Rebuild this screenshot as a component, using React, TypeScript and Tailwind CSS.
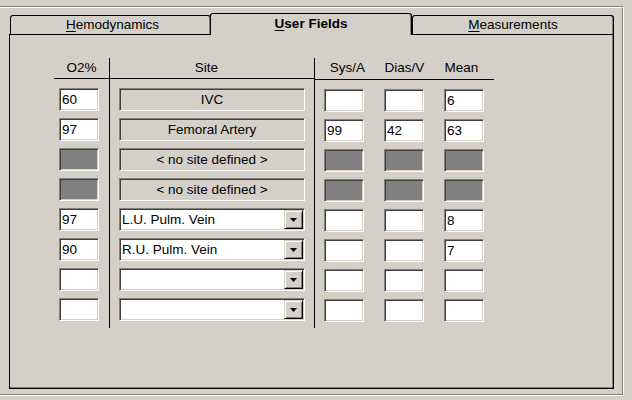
import { ReactNode } from "react"

type Site = { kind: "static" | "combo"; text: string }

interface Row {
  o2: string
  site: Site
  sys: string
  dias: string
  mean: string
  disabled?: boolean
}

const rows: Row[] = [
  { o2: "60", site: { kind: "static", text: "IVC" }, sys: "", dias: "", mean: "6" },
  { o2: "97", site: { kind: "static", text: "Femoral Artery" }, sys: "99", dias: "42", mean: "63" },
  { o2: "", site: { kind: "static", text: "< no site defined >" }, sys: "", dias: "", mean: "", disabled: true },
  { o2: "", site: { kind: "static", text: "< no site defined >" }, sys: "", dias: "", mean: "", disabled: true },
  { o2: "97", site: { kind: "combo", text: "L.U. Pulm. Vein" }, sys: "", dias: "", mean: "8" },
  { o2: "90", site: { kind: "combo", text: "R.U. Pulm. Vein" }, sys: "", dias: "", mean: "7" },
  { o2: "", site: { kind: "combo", text: "" }, sys: "", dias: "", mean: "" },
  { o2: "", site: { kind: "combo", text: "" }, sys: "", dias: "", mean: "" },
]

// classic win9x sunken edit border
const sunken =
  "border border-t-[#808080] border-l-[#808080] border-b-white border-r-white shadow-[inset_1px_1px_0_#404040,inset_-1px_-1px_0_#d4d0c8]"

function Field({ value, disabled, className = "" }: { value: string; disabled?: boolean; className?: string }) {
  return (
    <div
      className={`${sunken} h-[23px] flex items-center pl-[2px] leading-none ${
        disabled ? "bg-[#808080]" : "bg-white"
      } ${className}`}
    >
      {value}
    </div>
  )
}

function SiteBox({ site, disabled }: { site: Site; disabled?: boolean }) {
  if (site.kind === "static") {
    return (
      <div className={`${sunken} ml-[9px] w-[186px] h-[23px] flex items-center justify-center bg-[#d4d0c8] leading-none`}>
        {site.text}
      </div>
    )
  }
  return (
    <div className={`${sunken} ml-[9px] w-[186px] h-[23px] flex items-stretch bg-white p-[1px] leading-none`}>
      <div className="flex-1 flex items-center pl-[1px]">{disabled ? "" : site.text}</div>
      <div className="w-[19px] flex items-center justify-center bg-[#d4d0c8] border border-t-[#d4d0c8] border-l-[#d4d0c8] border-b-black border-r-black shadow-[inset_1px_1px_0_#fff,inset_-1px_-1px_0_#808080]">
        <svg width="7" height="4" viewBox="0 0 7 4" className="mt-[1px]">
          <path d="M0 0h7L3.5 4z" fill="#000" />
        </svg>
      </div>
    </div>
  )
}

function Tab({ children, selected, className = "" }: { children: ReactNode; selected?: boolean; className?: string }) {
  return (
    <div
      className={`flex items-center justify-center rounded-t-[3px] border-t border-l border-r border-t-black border-l-black border-r-black bg-[#d4d0c8] shadow-[inset_-1px_0_0_#808080] ${
        selected ? "h-[22px] -mb-[1px] -ml-[1px] relative z-10 font-bold" : "h-[19px]"
      } ${className}`}
    >
      {children}
    </div>
  )
}

function HeaderCell({ children, className = "" }: { children: ReactNode; className?: string }) {
  return <div className={`h-[21px] flex items-center justify-center ${className}`}>{children}</div>
}

export default function App() {
  return (
    <div className="w-[632px] h-[400px] bg-[#d4d0c8] pt-[6px] overflow-hidden font-['Liberation_Sans',Arial,sans-serif] text-[13.5px] text-black">
      {/* etched outer frame */}
      <div className="w-[624px] h-[390px] border-t border-r border-b border-t-[#808080] border-r-white border-b-white">
        <div className="h-full border-t border-r border-b border-t-white border-r-[#808080] border-b-[#808080] pl-[9px] pt-[5px]">
          {/* tabs */}
          <div className="flex items-end h-[21px] pl-[1px]">
            <Tab className="w-[201px]">
              <span className="pl-[4px]">
                <u className="underline-offset-2">H</u>emodynamics
              </span>
            </Tab>
            <Tab selected className="w-[202px]">
              <span>
                <u className="underline-offset-2">U</u>ser Fields
              </span>
            </Tab>
            <Tab className="w-[202px]">
              <span>
                <u className="underline-offset-2">M</u>easurements
              </span>
            </Tab>
          </div>

          {/* panel */}
          <div className="w-[605px] h-[355px] border border-black shadow-[inset_-1px_-1px_0_#808080] pl-[44px] pt-[23px]">
            <div className="flex">
              {/* O2% */}
              <div className="w-[55px] flex flex-col">
                <HeaderCell className="border-b border-black">O2%</HeaderCell>
                <div className="flex flex-col gap-[7px] pt-[9px] pb-[6px]">
                  {rows.map((r, i) => (
                    <Field key={i} value={r.o2} disabled={r.disabled} className="ml-[5px] w-[40px]" />
                  ))}
                </div>
              </div>
              <div className="w-[1px] bg-black" />

              {/* Site */}
              <div className="w-[204px] flex flex-col">
                <HeaderCell className="border-b border-black pr-[11px]">Site</HeaderCell>
                <div className="flex flex-col gap-[7px] pt-[9px] pb-[6px]">
                  {rows.map((r, i) => (
                    <SiteBox key={i} site={r.site} disabled={r.disabled} />
                  ))}
                </div>
              </div>
              <div className="w-[1px] bg-black" />

              {/* pressures */}
              <div className="w-[179px] flex flex-col">
                <div className="flex border-b border-black">
                  <HeaderCell className="w-[65px]">Sys/A</HeaderCell>
                  <HeaderCell className="w-[49px]">Dias/V</HeaderCell>
                  <HeaderCell className="w-[65px]">Mean</HeaderCell>
                </div>
                <div className="flex flex-col gap-[7px] pt-[9px] pb-[6px]">
                  {rows.map((r, i) => (
                    <div key={i} className="flex gap-[20px] pl-[9px]">
                      <Field value={r.sys} disabled={r.disabled} className="w-[40px]" />
                      <Field value={r.dias} disabled={r.disabled} className="w-[40px]" />
                      <Field value={r.mean} disabled={r.disabled} className="w-[40px]" />
                    </div>
                  ))}
                </div>
              </div>
            </div>
          </div>
        </div>
      </div>
    </div>
  )
}
